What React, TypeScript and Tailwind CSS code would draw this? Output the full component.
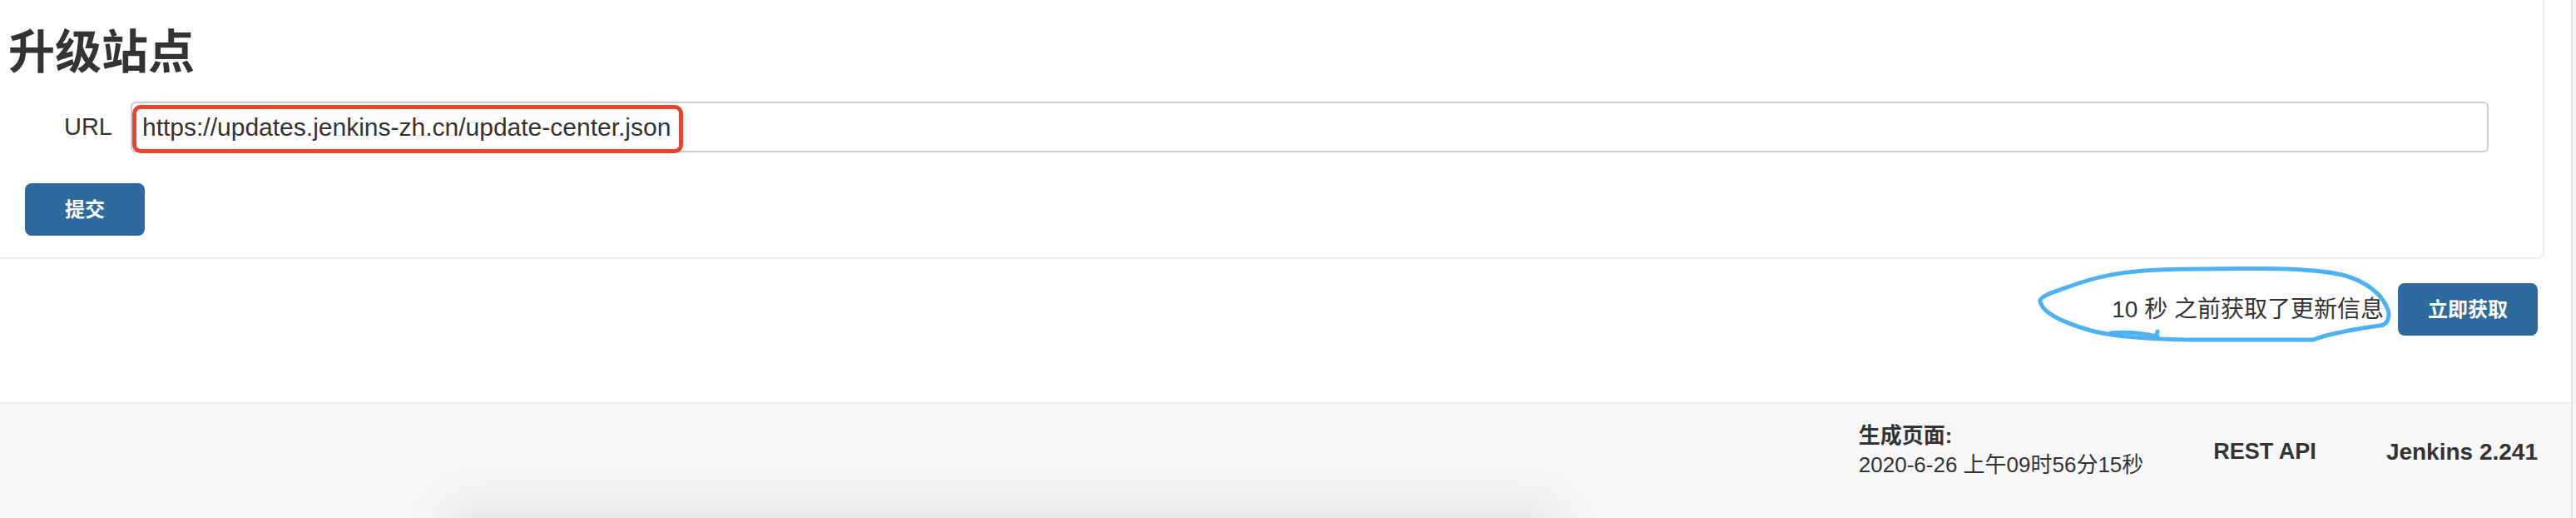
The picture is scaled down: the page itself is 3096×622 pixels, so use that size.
import React from "react";

export default function App() {
  return (
    <div className="relative flex h-[622px] w-[3096px] overflow-hidden bg-white font-['Liberation_Sans','Noto_Sans_CJK_SC',sans-serif] text-[#333333]">
      <div className="flex w-[3090px] flex-col">
        <div className="flex h-[483px] flex-col bg-white">
          {/* panel */}
          <div className="flex h-[311px] w-[3058px] flex-col rounded-br-[8px] border-r-2 border-b-2 border-[#eeeeee]">
            <h1 className="ml-[10px] mt-[31px] h-[64px] text-[56px] font-bold leading-[64px] text-[#333333]">
              升级站点
            </h1>
            <div className="mt-[27px] flex h-[61px] items-center">
              <label className="w-[157px] pr-[22px] text-right text-[29px] leading-none">URL</label>
              <div className="relative flex h-[61px] w-[2834px] items-center rounded-[6px] border-2 border-[#cccccc] pl-[12px] text-[30px]">
                <span>https://updates.jenkins-zh.cn/update-center.json</span>
                <div className="absolute left-0 top-[2px] h-[58px] w-[662px] rounded-[10px] border-[5px] border-[#e8442d]" />
              </div>
            </div>
            <div className="ml-[30px] mt-[37px] flex h-[63px] w-[144px] items-center justify-center rounded-[8px] bg-[#2e6a9d] text-[24px] font-bold text-white">
              提交
            </div>
          </div>
          {/* fetch row */}
          <div className="mt-[29px] flex items-center justify-end pr-[40px]">
            <span className="mr-[17px] text-[28px]">10 秒 之前获取了更新信息</span>
            <div className="flex h-[63px] w-[168px] items-center justify-center rounded-[8px] bg-[#2e6a9d] text-[24px] font-bold text-white">
              立即获取
            </div>
          </div>
        </div>
        {/* footer */}
        <div className="flex flex-1 items-start justify-end gap-[84px] border-t-2 border-[#e8edf1] bg-[#f7f7f7] pr-[40px] pt-[21px]">
          <div className="flex flex-col text-[26px] leading-[35px]">
            <span className="font-bold">生成页面:</span>
            <span>2020-6-26 上午09时56分15秒</span>
          </div>
          <span className="mt-[19px] text-[27px] font-bold leading-[35px]">REST API</span>
          <span className="mt-[19px] text-[28px] font-bold leading-[35px]">Jenkins 2.241</span>
        </div>
      </div>
      <div className="w-[2px] bg-[#e3e3e3]" />
      <div className="flex-1 bg-[#f7f7f7]" />

      {/* blue hand-drawn annotation */}
      <svg
        className="absolute left-[2445px] top-[318px]"
        width="432"
        height="96"
        viewBox="0 0 432 96"
        fill="none"
      >
        <path
          d="M 150 6 C 100 8, 70 16, 45 25 C 25 32, 5 38, 7 44 C 9 56, 30 68, 68 79 C 100 87, 140 89, 185 90 L 335 90 C 350 84, 380 78, 415 73 C 428 72, 427 56, 424 52 C 418 36, 400 20, 370 12 C 340 5, 290 4, 250 4.5 C 210 4.5, 180 5, 150 6 Z"
          stroke="#4cb2f5"
          strokeWidth="5"
          strokeLinecap="round"
          strokeLinejoin="round"
        />
        <path
          d="M 92 82 C 110 80, 130 82, 148 86 M 148 80 L 146 88"
          stroke="#4cb2f5"
          strokeWidth="5"
          strokeLinecap="round"
        />
      </svg>

      {/* soft shadow of an element below the view */}
      <div className="pointer-events-none absolute left-[560px] top-[632px] h-[100px] w-[1290px] shadow-[0_0_60px_20px_rgba(0,0,0,0.1)]" />
    </div>
  );
}
